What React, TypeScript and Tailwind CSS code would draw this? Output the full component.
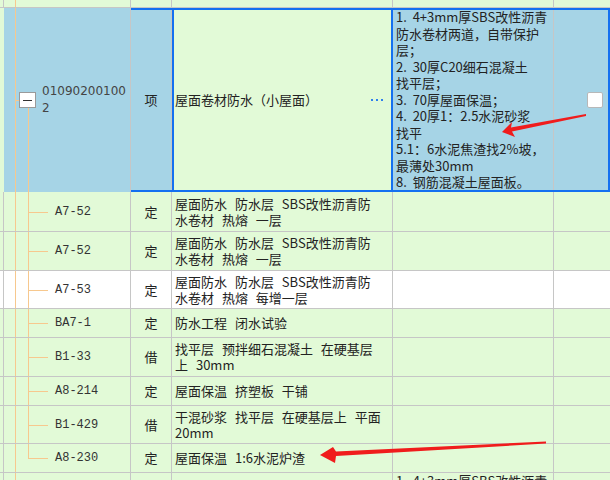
import React from 'react';

const LINE = 'border-[#c6c6c6]';
const TREE = 'bg-[#f7c88e]';
const GREEN = 'bg-[#e2fad7]';
const BLUE = 'bg-[#a6d4e6]';

type SubRow = {
  code: string;
  type: string;
  name: string[];
  h: string;
  bg?: string;
  last?: boolean;
};

const subRows: SubRow[] = [
  { code: 'A7-52', type: '定', name: ['屋面防水 防水层 SBS改性沥青防', '水卷材 热熔 一层'], h: 'h-[40px]' },
  { code: 'A7-52', type: '定', name: ['屋面防水 防水层 SBS改性沥青防', '水卷材 热熔 一层'], h: 'h-[39px]' },
  { code: 'A7-53', type: '定', name: ['屋面防水 防水层 SBS改性沥青防', '水卷材 热熔 每增一层'], h: 'h-[38px]', bg: 'bg-white' },
  { code: 'BA7-1', type: '定', name: ['防水工程 闭水试验'], h: 'h-[29px]' },
  { code: 'B1-33', type: '借', name: ['找平层 预拌细石混凝土 在硬基层', '上 30mm'], h: 'h-[39px]' },
  { code: 'A8-214', type: '定', name: ['屋面保温 挤塑板 干铺'], h: 'h-[29px]' },
  { code: 'B1-429', type: '借', name: ['干混砂浆 找平层 在硬基层上 平面', '20mm'], h: 'h-[38px]' },
  { code: 'A8-230', type: '定', name: ['屋面保温 1:6水泥炉渣'], h: 'h-[29px]', last: true },
];

const descLines = [
  '1.  4+3mm厚SBS改性沥青',
  '防水卷材两道，自带保护',
  '层；',
  '2.  30厚C20细石混凝土',
  '找平层；',
  '3.  70厚屋面保温；',
  '4.  20厚1：2.5水泥砂浆',
  '找平',
  '5.1：6水泥焦渣找2%坡，',
  '最薄处30mm',
  '8.  钢筋混凝土屋面板。',
];

function HeadCell() {
  return <div className={`h-full w-[4px] shrink-0 border-r ${LINE}`} />;
}

function Row({ r }: { r: SubRow }) {
  const bg = r.bg ?? GREEN;
  return (
    <div className={`flex ${r.h} border-b ${LINE} ${bg}`}>
      <HeadCell />
      <div className={`relative h-full w-[127px] shrink-0 border-r ${LINE}`}>
        <span className={`absolute left-[11px] top-0 bottom-0 w-px ${TREE}`} />
        <span className={`absolute left-[24px] top-0 w-px ${TREE} ${r.last ? 'h-1/2' : 'bottom-0'}`} />
        <span className={`absolute left-[24px] top-1/2 h-px w-[20px] ${TREE}`} />
        <div className="flex h-full items-center pl-[51px] font-['Liberation_Mono',monospace] text-[12px] text-[#333]">
          {r.code}
        </div>
      </div>
      <div className={`flex h-full w-[41px] shrink-0 items-center justify-center border-r ${LINE} text-[13px]`}>
        {r.type}
      </div>
      <div className={`flex h-full w-[221px] shrink-0 flex-col justify-center border-r ${LINE} pl-[3px] text-[13px] leading-[16px] [word-spacing:5px]`}>
        {r.name.map((l, i) => (
          <div key={i} className="whitespace-pre">{l}</div>
        ))}
      </div>
      <div className={`h-full w-[161px] shrink-0 border-r ${LINE}`} />
      <div className="h-full flex-1" />
    </div>
  );
}

export default function App() {
  return (
    <div className="relative h-[480px] w-[610px] overflow-hidden bg-white font-['Noto_Sans_CJK_SC',sans-serif] text-[#222]">
      {/* top partial row */}
      <div className={`flex h-[8px] border-b ${LINE} ${GREEN}`}>
        <HeadCell />
        <div className={`relative h-full w-[127px] shrink-0 border-r ${LINE}`}>
          <span className={`absolute left-[11px] top-0 bottom-0 w-px ${TREE}`} />
        </div>
        <div className={`h-full w-[41px] shrink-0 border-r ${LINE}`} />
        <div className={`h-full w-[221px] shrink-0 border-r ${LINE}`} />
        <div className={`h-full w-[161px] shrink-0 border-r ${LINE}`} />
      </div>

      {/* selected row */}
      <div className={`flex h-[184px] ${GREEN}`}>
        <div className="h-full w-[4px] shrink-0" />
        <div className="flex h-full flex-1 outline-2 -outline-offset-2 outline-[#1470f0]">
          <div className={`relative h-full w-[127px] shrink-0 border-r ${LINE} ${BLUE}`}>
            <span className={`absolute left-[11px] top-0 bottom-0 w-px ${TREE}`} />
            <span className={`absolute left-[11px] top-1/2 h-px w-[5px] ${TREE}`} />
            <span className={`absolute left-[24px] top-[100px] bottom-0 w-px ${TREE}`} />
            <div className="absolute left-[15px] top-[84px] flex h-[16px] w-[17px] items-center justify-center border border-[#9a9a9a] bg-white">
              <span className="h-px w-[9px] bg-[#333]" />
            </div>
            <div className="flex h-full flex-col justify-center pl-[38px] font-['DejaVu_Sans',sans-serif] text-[12px] leading-[17px] text-[#444]">
              <div>01090200100</div>
              <div>2</div>
            </div>
          </div>
          <div className={`flex h-full w-[41px] shrink-0 items-center justify-center border-r ${LINE} ${BLUE} text-[13px]`}>
            项
          </div>
          <div className={`flex h-full w-[221px] shrink-0 items-center justify-between pl-[3px] pr-[10px] ${GREEN} text-[13px] outline-2 -outline-offset-2 outline-[#1470f0]`}>
            <span>屋面卷材防水（小屋面）</span>
            <span className="flex gap-[3px]">
              <span className="h-[2px] w-[2px] bg-[#2f80ed]" />
              <span className="h-[2px] w-[2px] bg-[#2f80ed]" />
              <span className="h-[2px] w-[2px] bg-[#2f80ed]" />
            </span>
          </div>
          <div className={`h-full w-[161px] shrink-0 border-r ${LINE} ${BLUE} pl-[3px] pt-[1px] text-[13px] leading-[16.5px]`}>
            {descLines.map((l, i) => (
              <div key={i} className="whitespace-pre">{l}</div>
            ))}
          </div>
          <div className={`flex h-full flex-1 items-center pl-[33px] ${BLUE}`}>
            <span className="h-[16px] w-[16px] rounded-[2px] border border-[#b8b8b8] bg-white" />
          </div>
        </div>
      </div>

      {subRows.map((r, i) => (
        <Row key={i} r={r} />
      ))}

      {/* partial next row */}
      <div className={`flex h-[40px] ${GREEN}`}>
        <HeadCell />
        <div className={`relative h-full w-[127px] shrink-0 border-r ${LINE}`}>
          <span className={`absolute left-[11px] top-0 bottom-0 w-px ${TREE}`} />
        </div>
        <div className={`h-full w-[41px] shrink-0 border-r ${LINE}`} />
        <div className={`h-full w-[221px] shrink-0 border-r ${LINE}`} />
        <div className={`h-full w-[161px] shrink-0 border-r ${LINE} pl-[3px] text-[13px] leading-[16.5px]`}>
          <div className="whitespace-pre">1.  4+3mm厚SBS改性沥青</div>
        </div>
      </div>

      {/* red annotation arrows */}
      <svg className="pointer-events-none absolute left-0 top-0" width="610" height="480" viewBox="0 0 610 480">
        <polygon
          points="502,132 512,122 511,127.5 586,114 586,116 512,131.5 515,137"
          fill="#f01c1c"
        />
        <polygon
          points="320,455 333,447 336,451.5 546,441.5 546,443.5 336,456 335,463"
          fill="#f01c1c"
        />
      </svg>
    </div>
  );
}
